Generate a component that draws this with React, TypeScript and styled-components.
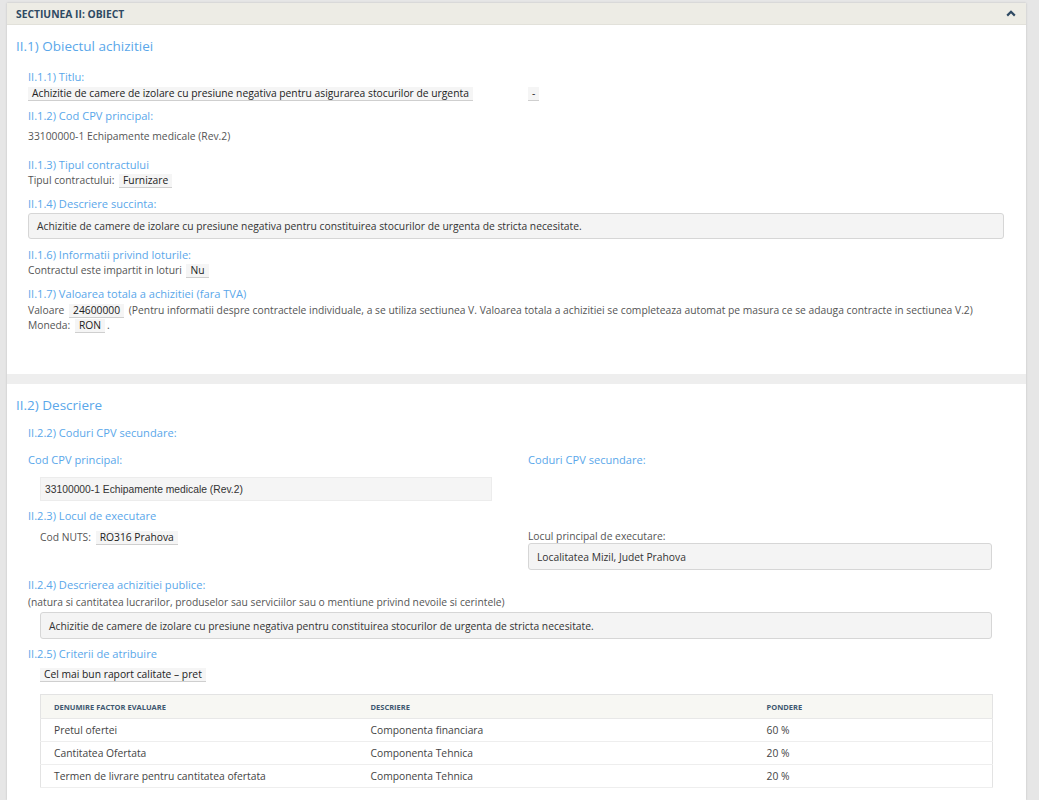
import React from "react"
import styled, { createGlobalStyle } from "styled-components"

const GlobalStyle = createGlobalStyle`
  html, body {
    margin: 0;
    padding: 0;
    background: #e6e6e6;
  }
  body {
    font-family: "Open Sans", "Liberation Sans", sans-serif;
    font-size: 10.3px;
    color: #555;
  }
`

const Page = styled.div`
  padding: 3px 13px 0 7px;
`

const Panel = styled.div`
  background: #fff;
  box-shadow: 0 0 2px rgba(0, 0, 0, 0.18);
`

const PanelHeader = styled.div`
  height: 22px;
  background: #edece5;
  border-bottom: 1px solid #e2e1da;
  display: flex;
  align-items: center;
  justify-content: space-between;
  padding: 0 10px 0 9px;
  box-sizing: border-box;
`

const PanelTitle = styled.div`
  font-size: 10.3px;
  font-weight: 700;
  color: #2f4a63;
`

const Section = styled.div<{ $top: number; $bottom: number }>`
  padding: ${({ $top }) => $top}px 22px ${({ $bottom }) => $bottom}px 9px;
`

const Divider = styled.div`
  height: 10px;
  background: #eeeeee;
`

const SectionTitle = styled.h2`
  margin: 0;
  font-size: 13.5px;
  line-height: 20px;
  font-weight: 400;
  color: #5aa7ea;
`

const Field = styled.div<{ $gap?: number }>`
  padding-left: 12px;
  margin-top: ${({ $gap }) => $gap ?? 6}px;
`

const FieldTitle = styled.h3`
  margin: 0;
  font-size: 11.1px;
  line-height: 17px;
  font-weight: 400;
  color: #5aa7ea;
`

const Text = styled.div<{ $top?: number; $indent?: number }>`
  line-height: 15px;
  margin-top: ${({ $top }) => $top ?? 0}px;
  padding-left: ${({ $indent }) => $indent ?? 0}px;
`

const Chip = styled.span<{ $flush?: boolean }>`
  display: inline-block;
  background: #f5f5f5;
  border-bottom: 1px solid #cfcfcf;
  color: #222;
  padding: 0 4px;
  line-height: 13px;
  margin: ${({ $flush }) => ($flush ? "0" : "0 2px")};
`

const Cols = styled.div<{ $top?: number }>`
  display: grid;
  grid-template-columns: 500px 1fr;
  margin-top: ${({ $top }) => $top ?? 0}px;
`

const Box = styled.div<{ $indent?: number; $right?: number; $top?: number }>`
  margin: ${({ $top }) => $top ?? 0}px ${({ $right }) => $right ?? 0}px 0 ${({ $indent }) => $indent ?? 0}px;
  background: #f4f4f4;
  border: 1px solid #d6d6d6;
  border-radius: 3px;
  height: 27px;
  box-sizing: border-box;
  display: flex;
  align-items: center;
  padding: 0 8px;
  color: #333;
`

const PlainBox = styled.div`
  margin: 9px 36px 0 12px;
  background: #f5f5f5;
  border: 1px solid #ececec;
  height: 24px;
  box-sizing: border-box;
  display: flex;
  align-items: center;
  padding: 0 4px;
  font-family: "Liberation Sans", Arial, sans-serif;
  font-size: 10.3px;
  color: #333;
`

const SubLabel = styled.div`
  font-size: 11.1px;
  line-height: 17px;
  color: #5aa7ea;
`

const Table = styled.table`
  margin: 12px 12px 0 12px;
  width: calc(100% - 24px);
  border-collapse: collapse;
  border: 1px solid #e3e3e3;
  table-layout: fixed;
`

const Col = styled.col<{ $w: number }>`
  width: ${({ $w }) => $w}px;
`

const Th = styled.th`
  height: 23px;
  background: #f7f7f3;
  text-align: left;
  padding: 0 13px;
  font-size: 7.5px;
  font-weight: 700;
  color: #3e5870;
  text-transform: uppercase;
  border-bottom: 1px solid #e8e8e8;
`

const Td = styled.td`
  height: 22px;
  padding: 0 13px;
  color: #444;
  border-bottom: 1px solid #eeeeee;
`

const Chevron = () => (
  <svg width="10" height="7" viewBox="0 0 10 7">
    <path d="M1.2 5.6 L5 1.8 L8.8 5.6" fill="none" stroke="#2f4a63" strokeWidth="2.2" />
  </svg>
)

const criteria = [
  ["Pretul ofertei", "Componenta financiara", "60 %"],
  ["Cantitatea Ofertata", "Componenta Tehnica", "20 %"],
  ["Termen de livrare pentru cantitatea ofertata", "Componenta Tehnica", "20 %"]
]

const desc =
  "Achizitie de camere de izolare cu presiune negativa pentru constituirea stocurilor de urgenta de stricta necesitate."

export default function App() {
  return (
    <Page>
      <GlobalStyle />
      <Panel>
        <PanelHeader>
          <PanelTitle>SECTIUNEA II: OBIECT</PanelTitle>
          <Chevron />
        </PanelHeader>

        <Section $top={11} $bottom={41}>
          <SectionTitle>II.1) Obiectul achizitiei</SectionTitle>

          <Field $gap={12}>
            <FieldTitle>II.1.1) Titlu:</FieldTitle>
            <Cols $top={1}>
              <Text>
                <Chip $flush>
                  Achizitie de camere de izolare cu presiune negativa pentru asigurarea stocurilor de urgenta
                </Chip>
              </Text>
              <Text>
                <Chip $flush>-</Chip>
              </Text>
            </Cols>
          </Field>

          <Field>
            <FieldTitle>II.1.2) Cod CPV principal:</FieldTitle>
            <Text $top={5}>33100000-1 Echipamente medicale (Rev.2)</Text>
          </Field>

          <Field $gap={12}>
            <FieldTitle>II.1.3) Tipul contractului</FieldTitle>
            <Text>
              Tipul contractului: <Chip>Furnizare</Chip>
            </Text>
          </Field>

          <Field $gap={7}>
            <FieldTitle>II.1.4) Descriere succinta:</FieldTitle>
            <Box $top={1} style={{ height: 26 }}>
              {desc}
            </Box>
          </Field>

          <Field $gap={7}>
            <FieldTitle>II.1.6) Informatii privind loturile:</FieldTitle>
            <Text>
              Contractul este impartit in loturi <Chip>Nu</Chip>
            </Text>
          </Field>

          <Field $gap={7}>
            <FieldTitle>II.1.7) Valoarea totala a achizitiei (fara TVA)</FieldTitle>
            <Text $top={1}>
              Valoare <Chip>24600000</Chip> (Pentru informatii despre contractele individuale, a se utiliza
              sectiunea V. Valoarea totala a achizitiei se completeaza automat pe masura ce se adauga contracte in
              sectiunea V.2)
            </Text>
            <Text>
              Moneda: <Chip>RON</Chip>.
            </Text>
          </Field>
        </Section>

        <Divider />

        <Section $top={11} $bottom={12}>
          <SectionTitle>II.2) Descriere</SectionTitle>

          <Field $gap={9}>
            <FieldTitle>II.2.2) Coduri CPV secundare:</FieldTitle>
            <Cols $top={10}>
              <div>
                <SubLabel>Cod CPV principal:</SubLabel>
                <PlainBox>33100000-1 Echipamente medicale (Rev.2)</PlainBox>
              </div>
              <div>
                <SubLabel>Coduri CPV secundare:</SubLabel>
              </div>
            </Cols>
          </Field>

          <Field>
            <FieldTitle>II.2.3) Locul de executare</FieldTitle>
            <Cols $top={6}>
              <Text $indent={12}>
                Cod NUTS: <Chip>RO316 Prahova</Chip>
              </Text>
              <div>
                <Text style={{ lineHeight: "13px" }}>Locul principal de executare:</Text>
                <Box $right={12}>Localitatea Mizil, Judet Prahova</Box>
              </div>
            </Cols>
          </Field>

          <Field>
            <FieldTitle>II.2.4) Descrierea achizitiei publice:</FieldTitle>
            <Text $top={2}>
              (natura si cantitatea lucrarilor, produselor sau serviciilor sau o mentiune privind nevoile si
              cerintele)
            </Text>
            <Box $indent={12} $right={12} $top={2}>
              {desc}
            </Box>
          </Field>

          <Field>
            <FieldTitle>II.2.5) Criterii de atribuire</FieldTitle>
            <Text $indent={12} $top={5}>
              <Chip $flush>Cel mai bun raport calitate – pret</Chip>
            </Text>
            <Table>
              <colgroup>
                <Col $w={317} />
                <Col $w={396} />
                <Col $w={239} />
              </colgroup>
              <thead>
                <tr>
                  <Th>Denumire factor evaluare</Th>
                  <Th>Descriere</Th>
                  <Th>Pondere</Th>
                </tr>
              </thead>
              <tbody>
                {criteria.map((row) => (
                  <tr key={row[0]}>
                    {row.map((cell) => (
                      <Td key={cell}>{cell}</Td>
                    ))}
                  </tr>
                ))}
              </tbody>
            </Table>
          </Field>
        </Section>
      </Panel>
    </Page>
  )
}
